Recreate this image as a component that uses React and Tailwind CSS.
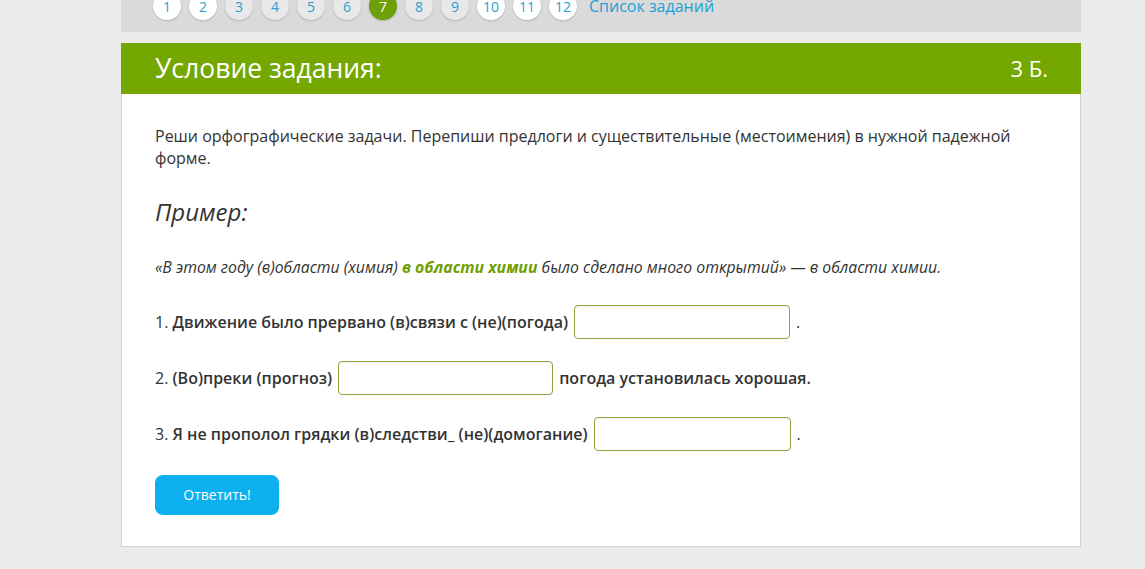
const pages = [
  { n: 1, state: 'done' },
  { n: 2, state: 'done' },
  { n: 3, state: 'todo' },
  { n: 4, state: 'todo' },
  { n: 5, state: 'todo' },
  { n: 6, state: 'todo' },
  { n: 7, state: 'current' },
  { n: 8, state: 'todo' },
  { n: 9, state: 'todo' },
  { n: 10, state: 'done' },
  { n: 11, state: 'done' },
  { n: 12, state: 'done' },
]

function PageDot({ n, state }) {
  if (state === 'current') {
    return (
      <span className="w-7 h-7 rounded-full bg-[#6d9f0a] text-white text-[14px] grid place-items-center shadow-[0_1px_2px_rgba(0,0,0,0.2)]">
        {n}
      </span>
    )
  }
  const bg = state === 'done' ? 'bg-white' : 'bg-[#e8e8e8]'
  return (
    <span className={`w-7 h-7 rounded-full ${bg} text-[#2a9fd0] text-[14px] grid place-items-center shadow-[0_1px_2px_rgba(0,0,0,0.18)]`}>
      {n}
    </span>
  )
}

function AnswerInput({ width }) {
  return (
    <input
      type="text"
      className={`${width} h-[34px] border border-[#8aa63a] rounded-[4px] bg-white outline-none px-2 shadow-[inset_0_1px_2px_rgba(0,0,0,0.06)]`}
    />
  )
}

export default function App() {
  return (
    <div className="min-h-[569px] bg-[#ebebeb] font-['Open_Sans',sans-serif] text-[#333]">
      <div className="ml-[121px] w-[960px]">
        <div className="h-8 bg-[#dadada] flex items-start pl-[32px] gap-2">
          <div className="flex gap-2 -mt-2">
            {pages.map((p) => <PageDot key={p.n} {...p} />)}
          </div>
          <a href="#" className="ml-1 -mt-[8px] text-[16px] leading-[28px] text-[#1ba0d7]">Список заданий</a>
        </div>

        <div className="mt-[11px] border border-[#cfcfcf] bg-white">
          <div className="-mx-px -mt-px h-[51px] bg-[#74a800] text-white flex items-center justify-between pl-[34px] pr-[33px]">
            <h1 className="text-[26.5px] font-normal">Условие задания:</h1>
            <span className="text-[22px]">3 Б.</span>
          </div>

          <div className="px-[33px] pt-[31px] pb-[31px]">
            <p className="text-[16px] leading-[22px]">
              Реши орфографические задачи. Перепиши предлоги и существительные (местоимения) в нужной падежной форме.
            </p>

            <h2 className="mt-[25px] text-[24px] italic font-normal">Пример:</h2>

            <p className="mt-[26px] text-[15.8px] italic">
              «В этом году (в)области (химия) <b className="text-[#6f9f00] font-bold">в области химии</b> было сделано много открытий» — в области химии.
            </p>

            <div className="mt-[25px] flex flex-col gap-[22px] text-[16px] font-semibold">
              <div className="flex items-center gap-[6px]">
                <span><span className="font-normal">1.</span> Движение было прервано (в)связи с (не)(погода)</span>
                <AnswerInput width="w-[216px]" />
                <span className="font-normal">.</span>
              </div>
              <div className="flex items-center gap-[6px]">
                <span><span className="font-normal">2.</span> (Во)преки (прогноз)</span>
                <AnswerInput width="w-[215px]" />
                <span>погода установилась хорошая.</span>
              </div>
              <div className="flex items-center gap-[6px]">
                <span><span className="font-normal">3.</span> Я не прополол грядки (в)следстви_ (не)(домогание)</span>
                <AnswerInput width="w-[197px]" />
                <span className="font-normal">.</span>
              </div>
            </div>

            <button className="mt-6 w-[124px] h-10 rounded-[8px] bg-[#0db0ee] text-white text-[14px]">
              Ответить!
            </button>
          </div>
        </div>
      </div>
    </div>
  )
}
